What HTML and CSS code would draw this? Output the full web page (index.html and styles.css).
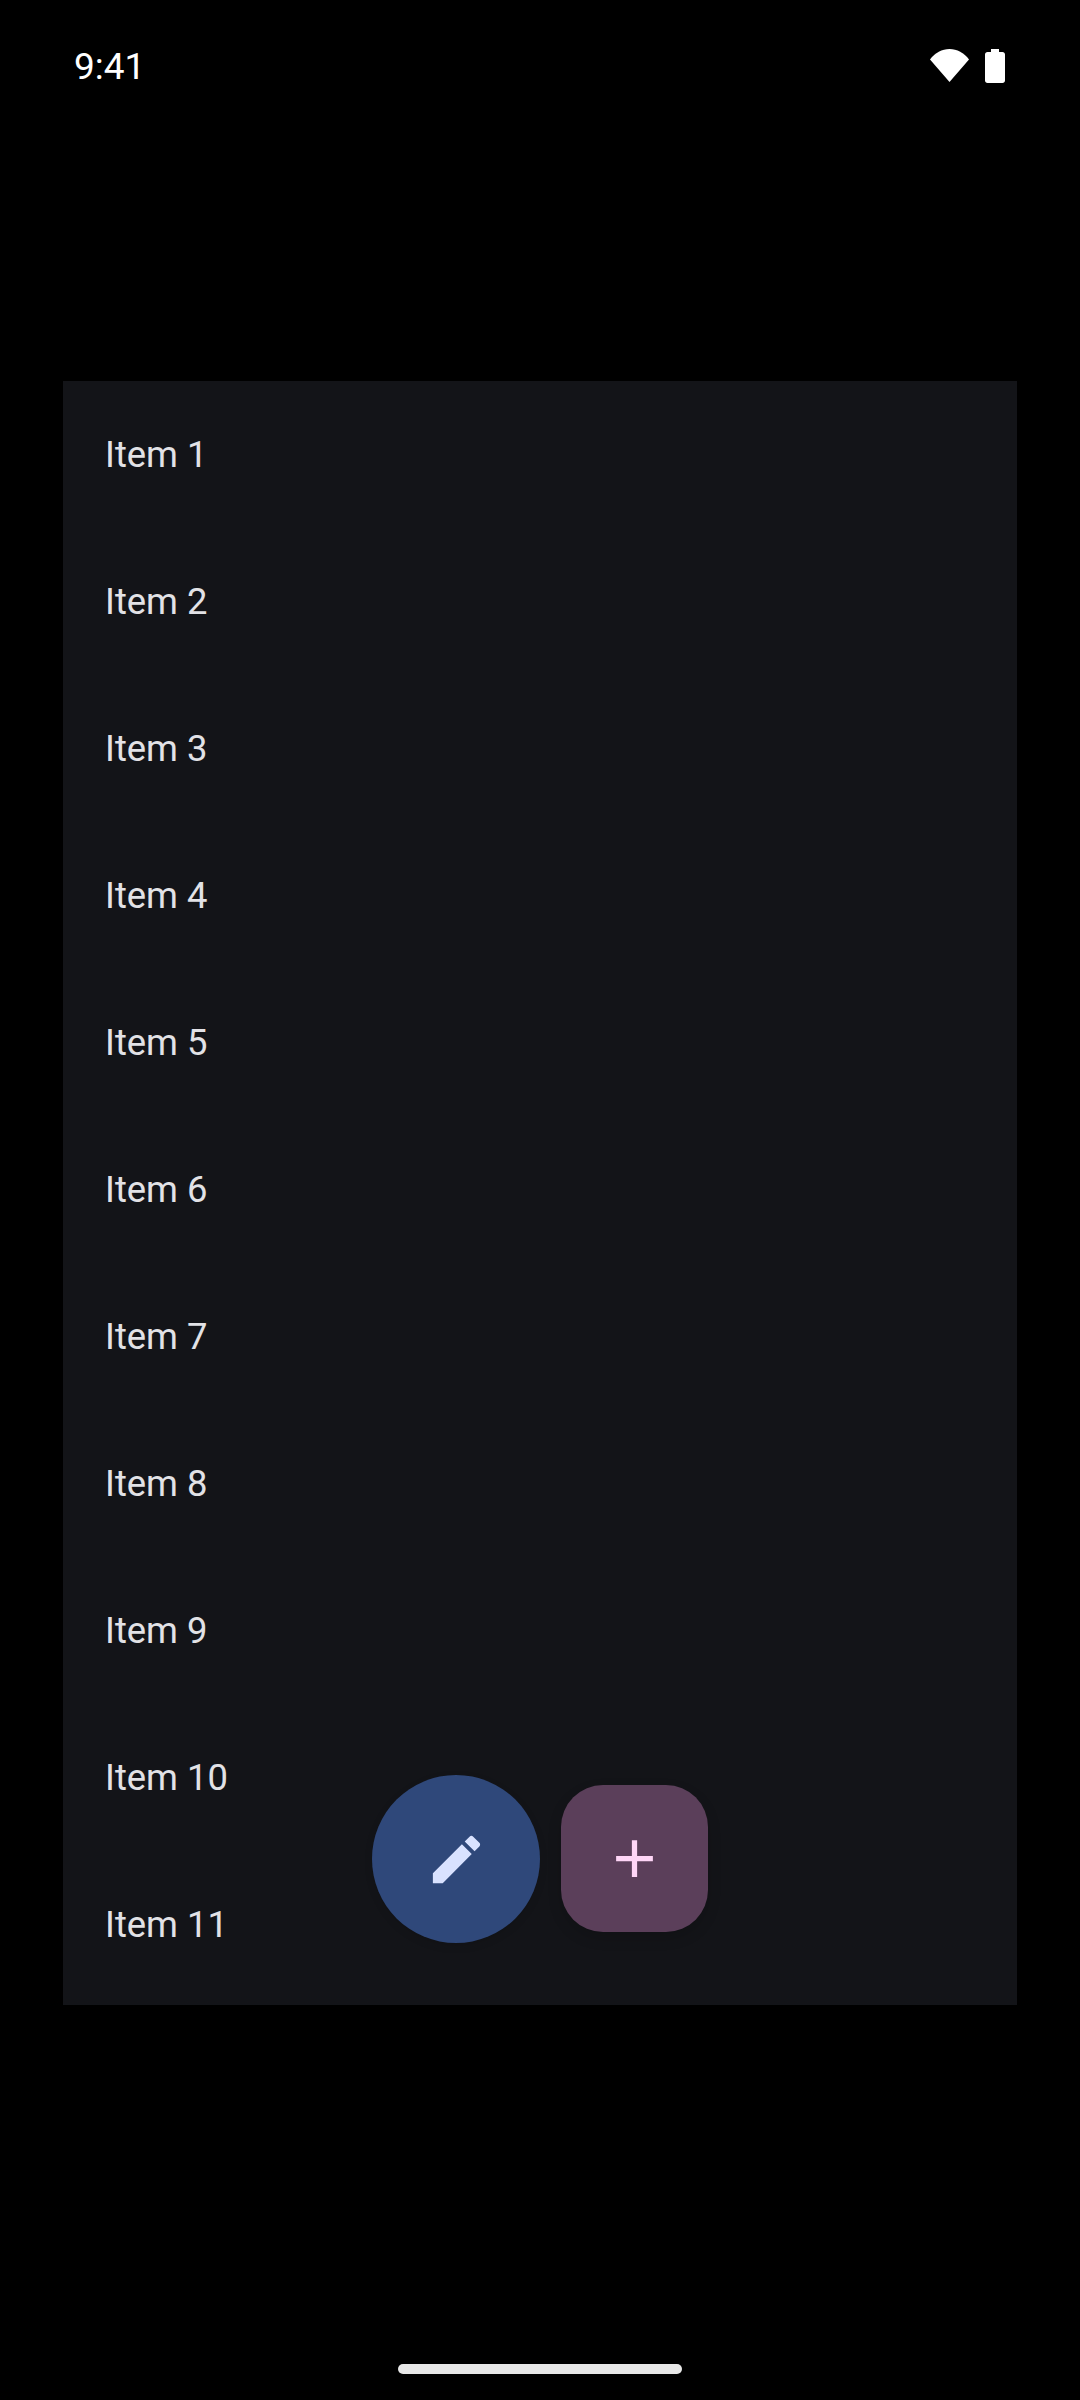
FILE: index.html
```html
<!DOCTYPE html>
<html>
<head>
    <meta charset="UTF-8">
    <meta name="viewport" content="width=device-width, initial-scale=1.0">
    <title>Items</title>
    <link rel="stylesheet" href="styles.css">
</head>
<body>
    <div class="screen">
        <div class="status-bar">
            <span class="time">9:41</span>
            <div class="status-icons">
                <svg class="wifi" width="39" height="33" viewBox="0 0 39 33">
                    <path d="M0 10.500C5 3.800 12 0 19.500 0S34 3.800 39 10.500L19.500 33z" fill="#fff"/>
                </svg>
                <svg class="battery" width="20" height="34" viewBox="0 0 20 34">
                    <path d="M6 0h8v3h3.500c1.400 0 2.500 1.100 2.500 2.500v26c0 1.400-1.100 2.500-2.500 2.500h-15C1.100 34 0 32.900 0 31.500v-26C0 4.100 1.100 3 2.500 3H6z" fill="#fff"/>
                </svg>
            </div>
        </div>

        <div class="panel">
            <div class="item">Item 1</div>
            <div class="item">Item 2</div>
            <div class="item">Item 3</div>
            <div class="item">Item 4</div>
            <div class="item">Item 5</div>
            <div class="item">Item 6</div>
            <div class="item">Item 7</div>
            <div class="item">Item 8</div>
            <div class="item">Item 9</div>
            <div class="item">Item 10</div>
            <div class="item">Item 11</div>

            <div class="fab-row">
                <button class="fab fab-edit">
                    <svg width="63" height="63" viewBox="0 0 24 24">
                        <path d="M3 17.250V21h3.750L17.810 9.940l-3.750-3.750L3 17.250zM20.710 7.040c.39-.39.39-1.020 0-1.410l-2.340-2.340c-.39-.39-1.020-.39-1.410 0l-1.830 1.830 3.750 3.750 1.830-1.830z" fill="#d9e2ff"/>
                    </svg>
                </button>
                <button class="fab fab-add">
                    <svg width="63" height="63" viewBox="0 0 24 24">
                        <path d="M19 13h-6v6h-2v-6H5v-2h6V5h2v6h6z" fill="#ffd6f7"/>
                    </svg>
                </button>
            </div>
        </div>

        <div class="nav-bar">
            <div class="home-handle"></div>
        </div>
    </div>
</body>
</html>
```

FILE: styles.css
```css
html, body {
    margin: 0;
    background-color: #000;
}
.screen {
    display: flex;
    flex-direction: column;
    width: 1080px;
    height: 2400px;
    font-family: 'Roboto', sans-serif;
}
.status-bar {
    display: flex;
    justify-content: space-between;
    align-items: center;
    height: 132px;
    padding: 0 75px 0 74px;
}
.time {
    color: #fff;
    font-size: 37px;
}
.status-icons {
    display: flex;
    align-items: flex-start;
    gap: 16px;
}
.panel {
    position: relative;
    width: 954px;
    height: 1624px;
    margin: 249px 0 0 63px;
    background-color: #131418;
}
.item {
    display: flex;
    align-items: center;
    height: 147px;
    padding-left: 42px;
    color: #e2e2e6;
    font-size: 36.400px;
}
.fab-row {
    position: absolute;
    left: 309px;
    top: 1394px;
    display: flex;
    align-items: flex-start;
    gap: 21px;
}
.fab {
    display: flex;
    align-items: center;
    justify-content: center;
    padding: 0;
    border: none;
}
.fab-edit {
    width: 168px;
    height: 168px;
    border-radius: 50%;
    background-color: #2f487a;
    box-shadow: 0 3px 8px rgba(0, 0, 0, 0.1);
}
.fab-add {
    width: 147px;
    height: 147px;
    margin-top: 10px;
    border-radius: 42px;
    background-color: #5b3f5a;
    box-shadow: 0 6px 14px rgba(0, 0, 0, 0.15);
}
.nav-bar {
    display: flex;
    justify-content: center;
    padding-top: 359px;
}
.home-handle {
    width: 284px;
    height: 10px;
    border-radius: 5px;
    background-color: #e8e8e8;
}
```
